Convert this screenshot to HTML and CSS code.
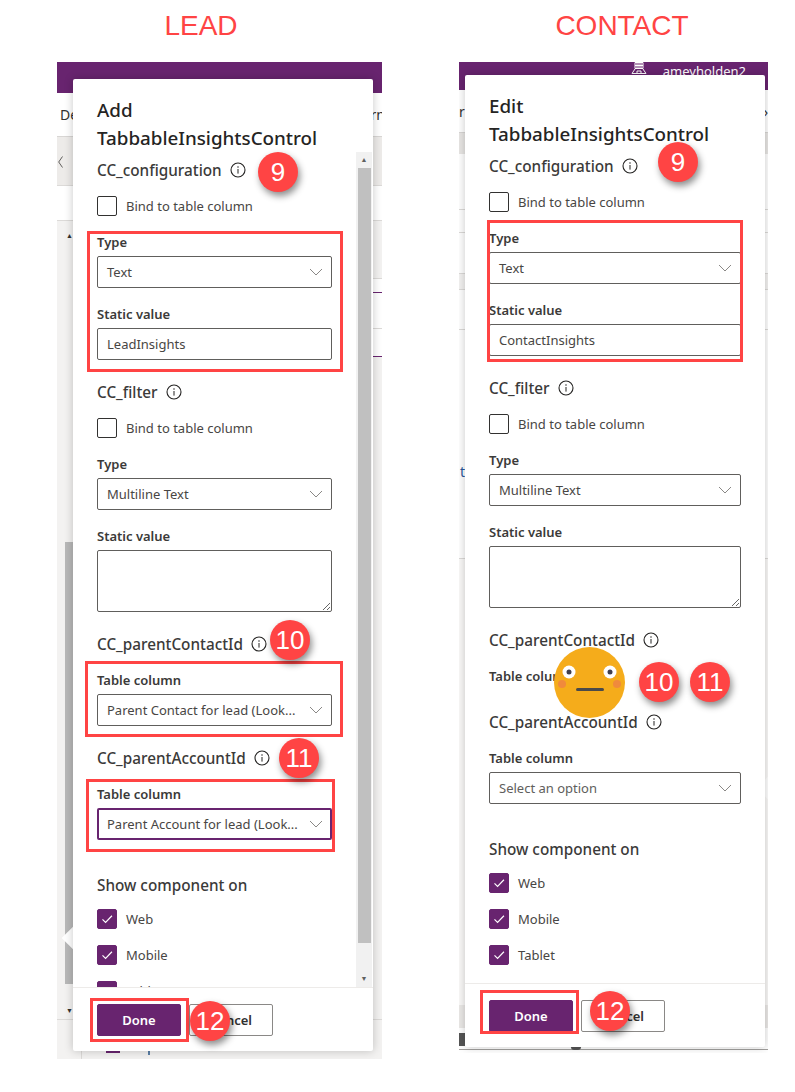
FILE: index.html
```html
<!DOCTYPE html>
<html lang="en">
<head>
    <meta charset="UTF-8">
    <title>Lead and contact control settings</title>
    <link rel="stylesheet" href="styles.css">
</head>
<body>
    <svg class="sprite" xmlns="http://www.w3.org/2000/svg">
        <symbol id="info" viewBox="0 0 16 16">
            <circle cx="8" cy="8" r="7" fill="none" stroke="currentColor" stroke-width="1.1"/>
            <rect x="7.5" y="7" width="1" height="4.6" fill="currentColor"/>
            <circle cx="8" cy="5" r="0.75" fill="currentColor"/>
        </symbol>
        <symbol id="chevron" viewBox="0 0 14 8">
            <path d="M1 1l6 6 6-6" fill="none" stroke="currentColor" stroke-width="1"/>
        </symbol>
        <symbol id="tick" viewBox="0 0 20 20">
            <path d="M5 10.5l3.4 3.4L15.5 6.4" fill="none" stroke="currentColor" stroke-width="1.3"/>
        </symbol>
    </svg>

    <div class="page">
        <!-- lead side -->
        <div class="side side-lead">
            <h2 class="side-title">LEAD</h2>
            <div class="frame">
                <div class="app-bar"></div>
                <div class="toolbar"><span>De</span><span>rn</span></div>
                <div class="row row-back">
                    <svg class="back" viewBox="0 0 5 12"><path d="M4.5 .5L.7 6l3.8 5.5" fill="none" stroke="#605e5c"/></svg>
                </div>
                <div class="row row-small"></div>
                <div class="row-tree"><span class="tree-arrow">&#9650;</span></div>
                <div class="row-rule"></div>
                <div class="row row-thin purple"></div>
                <div class="row row-mid"></div>
                <div class="row row-mid2 purple"></div>
                <div class="row-fill">
                    <div class="outer-track"></div>
                </div>
                <div class="row row-bottom"><span class="tree-arrow tree-arrow-down">&#9660;</span></div>
                <div class="row-last">
                    <span class="bottom-tab"></span>
                    <span class="bottom-tick"></span>
                </div>

                <div class="callout callout-left"></div>

                <div class="dialog">
                    <div class="dialog-title">Add<br>TabbableInsightsControl</div>
                    <div class="dialog-body">
                        <div class="dialog-scroll">
                            <div class="prop-name">CC_configuration <svg class="info"><use href="#info"/></svg></div>
                            <div class="check-row"><span class="check"></span>Bind to table column</div>
                            <div class="field-label">Type</div>
                            <div class="select"><span>Text</span><svg class="chevron"><use href="#chevron"/></svg></div>
                            <div class="field-label field-next">Static value</div>
                            <input class="text-input" type="text" value="LeadInsights">

                            <div class="prop-name">CC_filter <svg class="info"><use href="#info"/></svg></div>
                            <div class="check-row"><span class="check"></span>Bind to table column</div>
                            <div class="field-label">Type</div>
                            <div class="select"><span>Multiline Text</span><svg class="chevron"><use href="#chevron"/></svg></div>
                            <div class="field-label field-next">Static value</div>
                            <textarea class="text-area"></textarea>

                            <div class="prop-name">CC_parentContactId <svg class="info"><use href="#info"/></svg></div>
                            <div class="field-label field-table">Table column</div>
                            <div class="select"><span>Parent Contact for lead (Look...</span><svg class="chevron"><use href="#chevron"/></svg></div>

                            <div class="prop-name">CC_parentAccountId <svg class="info"><use href="#info"/></svg></div>
                            <div class="field-label field-table">Table column</div>
                            <div class="select select-focus"><span>Parent Account for lead (Look...</span><svg class="chevron"><use href="#chevron"/></svg></div>

                            <div class="prop-name show-on">Show component on</div>
                            <div class="check-row check-first"><span class="check checked"><svg><use href="#tick"/></svg></span>Web</div>
                            <div class="check-row"><span class="check checked"><svg><use href="#tick"/></svg></span>Mobile</div>
                            <div class="check-row"><span class="check checked"><svg><use href="#tick"/></svg></span>Tablet</div>
                        </div>
                        <div class="scrollbar">
                            <span class="scroll-arrow">&#9650;</span>
                            <div class="scroll-track"><div class="scroll-thumb"></div></div>
                            <span class="scroll-arrow">&#9660;</span>
                        </div>
                    </div>
                    <div class="dialog-footer">
                        <button class="btn btn-primary">Done</button>
                        <button class="btn">Cancel</button>
                    </div>
                </div>

                <div class="mark lead-a"></div>
                <div class="mark lead-b"></div>
                <div class="mark lead-c"></div>
                <div class="mark lead-d"></div>
                <div class="pin lead-9">9</div>
                <div class="pin lead-10">10</div>
                <div class="pin lead-11">11</div>
                <div class="pin lead-12">12</div>
            </div>
        </div>

        <!-- contact side -->
        <div class="side side-contact">
            <h2 class="side-title">CONTACT</h2>
            <div class="frame">
                <div class="app-bar app-bar-user">
                    <svg class="env-icon" viewBox="0 0 16 12">
                        <path d="M4 .5h8v6H4zM4 3.5h8M8 .5v6M6 .5v6M10 .5v6M1 11.5h14M4 7l-3 4.5M12 7l3 4.5M6 9h4v2.5H6z" fill="none" stroke="#fff"/>
                    </svg>
                    <span>ameyholden2</span>
                </div>
                <div class="toolbar toolbar-contact"><span>rn</span><span>&#8250;</span></div>
                <div class="row row-grey"></div>
                <div class="row row-contact-a"></div>
                <div class="row row-contact-b"></div>
                <div class="row row-contact-c"></div>
                <div class="row row-contact-d"></div>
                <div class="row row-contact-f"></div>
                <div class="row row-contact-e"><span class="stray">t</span></div>
                <div class="row-fill row-fill-contact"></div>
                <div class="row-bottom-grey"></div>
                <div class="row row-bottom-contact">
                    <span class="stray-dark"></span>
                    <span class="stray-dot"></span>
                </div>
                <div class="row-last-contact"></div>

                <div class="callout callout-right"></div>

                <div class="dialog dialog-contact">
                    <div class="dialog-title">Edit<br>TabbableInsightsControl</div>
                    <div class="dialog-body">
                        <div class="dialog-scroll">
                            <div class="prop-name">CC_configuration <svg class="info"><use href="#info"/></svg></div>
                            <div class="check-row"><span class="check"></span>Bind to table column</div>
                            <div class="field-label">Type</div>
                            <div class="select"><span>Text</span><svg class="chevron"><use href="#chevron"/></svg></div>
                            <div class="field-label field-next">Static value</div>
                            <input class="text-input" type="text" value="ContactInsights">

                            <div class="prop-name">CC_filter <svg class="info"><use href="#info"/></svg></div>
                            <div class="check-row"><span class="check"></span>Bind to table column</div>
                            <div class="field-label">Type</div>
                            <div class="select"><span>Multiline Text</span><svg class="chevron"><use href="#chevron"/></svg></div>
                            <div class="field-label field-next">Static value</div>
                            <textarea class="text-area"></textarea>

                            <div class="prop-name">CC_parentContactId <svg class="info"><use href="#info"/></svg></div>
                            <div class="field-label field-table">Table column</div>

                            <div class="prop-name prop-after-label">CC_parentAccountId <svg class="info"><use href="#info"/></svg></div>
                            <div class="field-label field-table">Table column</div>
                            <div class="select"><span class="placeholder">Select an option</span><svg class="chevron"><use href="#chevron"/></svg></div>

                            <div class="prop-name show-on">Show component on</div>
                            <div class="check-row check-first"><span class="check checked"><svg><use href="#tick"/></svg></span>Web</div>
                            <div class="check-row"><span class="check checked"><svg><use href="#tick"/></svg></span>Mobile</div>
                            <div class="check-row"><span class="check checked"><svg><use href="#tick"/></svg></span>Tablet</div>
                        </div>
                    </div>
                    <div class="dialog-footer">
                        <button class="btn btn-primary">Done</button>
                        <button class="btn">Cancel</button>
                    </div>
                </div>

                <div class="mark contact-a"></div>
                <div class="mark contact-d"></div>
                <svg class="face" viewBox="0 0 71 71">
                    <circle cx="35.5" cy="35.5" r="35.5" fill="#f5ac1b"/>
                    <circle cx="8" cy="37" r="4" fill="#f08a3c"/>
                    <circle cx="63" cy="37" r="4" fill="#f08a3c"/>
                    <circle cx="15" cy="25" r="6.5" fill="#fff"/>
                    <circle cx="56" cy="25" r="6.5" fill="#fff"/>
                    <circle cx="15" cy="25" r="2.5" fill="#3f3f4f"/>
                    <circle cx="56" cy="25" r="2.5" fill="#3f3f4f"/>
                    <rect x="22" y="41" width="28" height="3" rx="1.5" fill="#4a4a4a"/>
                </svg>
                <div class="pin contact-9">9</div>
                <div class="pin contact-10">10</div>
                <div class="pin contact-11">11</div>
                <div class="pin contact-12">12</div>
            </div>
        </div>
    </div>
</body>
</html>
```

FILE: styles.css
```css
* {
    margin: 0;
    padding: 0;
    box-sizing: border-box;
}

body {
    background: #fff;
    font-family: "Noto Sans", "Open Sans", sans-serif;
    color: #323130;
}

.sprite {
    display: none;
}

.page {
    display: flex;
    gap: 77px;
    padding-left: 57px;
}

.side-lead {
    width: 325px;
}

.side-contact {
    width: 309px;
}

.side-title {
    height: 62px;
    padding-top: 9px;
    font-family: "Liberation Sans", Arial, sans-serif;
    font-size: 28px;
    line-height: 34px;
    font-weight: 400;
    color: #ff4444;
    text-align: center;
}

.side-lead .side-title {
    padding-right: 37px;
}

.side-contact .side-title {
    padding-left: 17px;
}

.frame {
    position: relative;
    display: flex;
    flex-direction: column;
    background: #f3f2f1;
    overflow: hidden;
}

.side-lead .frame {
    height: 997px;
}

.side-contact .frame {
    height: 991px;
}

/* app behind the dialog */
.app-bar {
    height: 31px;
    background: #68246f;
    flex-shrink: 0;
}

.app-bar-user {
    height: 28px;
    display: flex;
    justify-content: flex-end;
    gap: 16px;
    padding-right: 22px;
    color: #fff;
    font-size: 13px;
    line-height: 18px;
}

.env-icon {
    width: 16px;
    height: 12px;
}

.toolbar {
    height: 44px;
    display: flex;
    justify-content: space-between;
    align-items: center;
    padding-left: 3px;
    margin-right: -3px;
    background: #fff;
    border-bottom: 1px solid #d8d6d4;
    font-size: 14px;
}

.toolbar-contact {
    height: 43px;
    padding-left: 0;
    margin-right: 0;
}

.row {
    border-bottom: 1px solid #dcdad8;
    background: #fff;
}

.row-back {
    height: 49px;
    background: #edebe9;
}

.back {
    display: block;
    width: 5px;
    height: 12px;
    margin: 19px 0 0 1px;
}

.row-small {
    height: 35px;
}

.row-tree {
    height: 57px;
    background: #f3f2f1;
}

.tree-arrow {
    display: block;
    padding: 10px 0 0 9px;
    font-size: 7px;
    color: #323130;
}

.tree-arrow-down {
    padding-top: 0;
    line-height: 8px;
}

.row-rule {
    height: 1px;
    margin-left: 316px;
    background: #dcdad8;
}

.row-thin {
    height: 14px;
    margin-left: 316px;
}

.row-mid {
    height: 36px;
    margin-left: 316px;
}

.row-mid2 {
    height: 28px;
    margin-left: 316px;
}

.purple {
    border-bottom-color: #68246f;
}

.row-fill {
    flex: 1;
}

.outer-track {
    width: 8px;
    height: 442px;
    margin: 185px 0 0 8px;
    background: #b8b8b8;
}

.row-bottom {
    height: 13px;
    background: #f3f2f1;
}

.row-last {
    height: 39px;
    display: flex;
    align-items: flex-start;
    margin-left: 24px;
    padding: 31px 0 0 24px;
    border-left: 1px solid #dcdad8;
}

.bottom-tab {
    width: 14px;
    height: 2px;
    background: #68246f;
}

.bottom-tick {
    width: 2px;
    height: 4px;
    margin-left: 28px;
    background: #5b7fa6;
}

.row-grey {
    height: 21px;
    background: #e8e6e4;
    border-bottom: none;
}

.row-contact-a {
    height: 56px;
}

.row-contact-b {
    height: 23px;
}

.row-contact-c {
    height: 41px;
}

.row-contact-d {
    height: 16px;
    background: #f3f2f1;
}

.row-contact-f {
    height: 40px;
}

.row-contact-e {
    height: 229px;
    font-size: 14px;
    line-height: 16px;
}

.stray {
    display: block;
    padding: 134px 0 0 1px;
    color: #2b579a;
}

.row-fill-contact {
    background: #faf9f8;
}

.row-bottom-grey {
    height: 23px;
    background: #ebe9e7;
}

.row-bottom-contact {
    display: flex;
    align-items: flex-start;
    height: 22px;
    border-bottom-color: #a19f9d;
}

.stray-dark {
    width: 6px;
    height: 13px;
    margin-top: 5px;
    background: #555;
}

.stray-dot {
    width: 10px;
    height: 3px;
    margin: 19px 0 0 106px;
    border-radius: 0 0 5px 5px;
    background: #555;
}

.row-last-contact {
    height: 3px;
    background: #fff;
}

.callout {
    position: absolute;
    width: 16px;
    height: 16px;
    background: #fff;
    transform: rotate(45deg);
}

.callout-left {
    left: 8px;
    top: 868px;
}

.callout-right {
    left: 301px;
    top: 718px;
}

/* dialog */
.dialog {
    position: absolute;
    left: 16px;
    top: 17px;
    width: 300px;
    height: 972px;
    display: flex;
    flex-direction: column;
    background: #fff;
    border-radius: 2px;
    box-shadow: 0 0 10px rgba(0, 0, 0, 0.22);
}

.dialog-contact {
    left: 6px;
    top: 13px;
}

.dialog-title {
    padding: 17px 24px 0;
    font-size: 18.8px;
    line-height: 28px;
    font-weight: 500;
    color: #252423;
}

.dialog-body {
    flex: 1;
    min-height: 0;
    display: flex;
}

.dialog-scroll {
    flex: 1;
    min-width: 0;
    padding: 6px 24px 0;
    overflow: hidden;
}

.scrollbar {
    width: 16px;
    margin-right: 1px;
    display: flex;
    flex-direction: column;
    background: #f1f1f1;
}

.scroll-arrow {
    height: 16px;
    font-size: 7px;
    line-height: 16px;
    text-align: center;
    color: #606060;
}

.scroll-track {
    flex: 1;
    padding: 0 1px 28px 2px;
}

.scroll-thumb {
    height: 100%;
    background: #c0c0c0;
}

.prop-name {
    display: flex;
    align-items: center;
    gap: 8px;
    height: 24px;
    margin-top: 20px;
    font-size: 15.3px;
    font-weight: 500;
    color: #3b3a39;
}

.dialog-scroll > .prop-name:first-child {
    margin-top: 0;
}

.prop-after-label {
    margin-top: 24px;
}

.show-on {
    margin-top: 33px;
}

.info {
    width: 16px;
    height: 16px;
    color: #252423;
}

.check-row {
    display: flex;
    align-items: center;
    gap: 9px;
    height: 20px;
    margin-top: 14px;
    font-size: 13px;
    color: #484644;
}

.check-row + .check-row {
    margin-top: 16px;
}

.check-first {
    margin-top: 12px;
}

.check {
    width: 20px;
    height: 20px;
    flex-shrink: 0;
    border: 1px solid #323130;
    border-radius: 2px;
    background: #fff;
}

.check.checked {
    border-color: #68246f;
    background: #68246f;
    color: #fff;
}

.check svg {
    display: block;
    width: 18px;
    height: 18px;
}

.field-label {
    height: 20px;
    margin: 16px 0 4px;
    font-size: 13px;
    line-height: 20px;
    font-weight: 600;
    color: #3b3a39;
}

.field-table {
    margin-top: 14px;
}

.select,
.text-input {
    display: flex;
    align-items: center;
    width: 100%;
    height: 32px;
    padding: 0 9px;
    border: 1px solid #605e5c;
    border-radius: 2px;
    background: #fff;
    font-family: inherit;
    font-size: 13px;
    color: #484644;
    outline: none;
}

.select span {
    flex: 1;
    white-space: nowrap;
}

.select-focus {
    border: 2px solid #68246f;
    padding: 0 8px;
}

.placeholder {
    color: #605e5c;
}

.chevron {
    width: 14px;
    height: 8px;
    margin-right: -1px;
    color: #8a8886;
    flex-shrink: 0;
}

.text-area {
    display: block;
    width: 100%;
    height: 62px;
    border: 1px solid #605e5c;
    border-radius: 2px;
    outline: none;
}

.dialog-footer {
    height: 64px;
    flex-shrink: 0;
    display: flex;
    gap: 8px;
    padding: 16px 24px 0;
    border-top: 1px solid #edebe9;
}

.btn {
    width: 84px;
    height: 32px;
    border: 1px solid #8a8886;
    border-radius: 2px;
    background: #fff;
    font-family: inherit;
    font-size: 13px;
    font-weight: 600;
    color: #323130;
}

.btn-primary {
    border-color: #68246f;
    background: #68246f;
    color: #fff;
}

/* annotations over the screenshots */
.mark {
    position: absolute;
    border: 3px solid #ff4444;
}

.lead-a { left: 30px; top: 169px; width: 256px; height: 141px; }
.lead-b { left: 28px; top: 599px; width: 258px; height: 76px; }
.lead-c { left: 29px; top: 717px; width: 249px; height: 73px; }
.lead-d { left: 33px; top: 936px; width: 99px; height: 44px; }
.contact-a { left: 28px; top: 158px; width: 256px; height: 142px; }
.contact-d { left: 21px; top: 928px; width: 99px; height: 44px; }

.pin {
    position: absolute;
    width: 40px;
    height: 40px;
    border-radius: 50%;
    background: #ff4444;
    box-shadow: 2px 4px 7px rgba(0, 0, 0, 0.45);
    font-family: "Liberation Sans", Arial, sans-serif;
    font-size: 26px;
    line-height: 40px;
    text-align: center;
    color: #fff;
}

.lead-9 { left: 201px; top: 90px; }
.lead-10 { left: 213px; top: 558px; }
.lead-11 { left: 222px; top: 676px; }
.lead-12 { left: 133px; top: 939px; }
.contact-9 { left: 199px; top: 80px; }
.contact-10 { left: 180px; top: 600px; }
.contact-11 { left: 231px; top: 600px; }
.contact-12 { left: 131px; top: 929px; }

.face {
    position: absolute;
    left: 95px;
    top: 585px;
    width: 71px;
    height: 71px;
}
```
